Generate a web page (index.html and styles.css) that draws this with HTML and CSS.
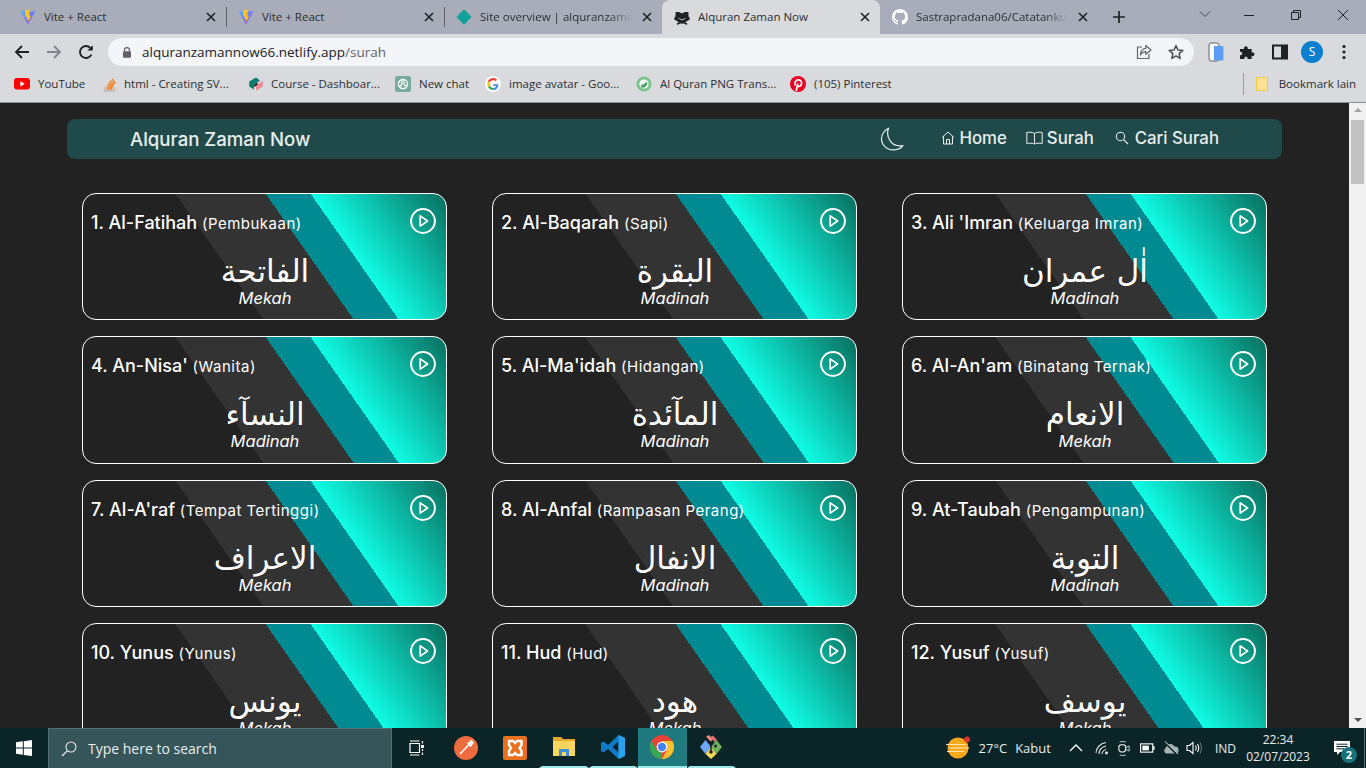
FILE: index.html
```html
<!DOCTYPE html>
<html lang="en">
<head>
  <meta charset="UTF-8">
  <title>Alquran Zaman Now</title>
  <link rel="stylesheet" href="styles.css">
</head>
<body>
  <!-- Shared icons -->
  <svg class="sprite" aria-hidden="true">
    <defs>
      <linearGradient id="vite-v" x1="0" y1="0" x2="1" y2="1">
        <stop offset="0" stop-color="#4fb6f5"/>
        <stop offset="1" stop-color="#a13cf0"/>
      </linearGradient>
    </defs>
    <symbol id="i-vite" viewBox="0 0 16 16">
      <path d="M0.5 2.2 15.5 2.2 8 15.5z" fill="url(#vite-v)"/>
      <path d="M10.6 0.4 5 1.6 5.4 8 7.2 7.6 6.6 10.6 8.2 10.2 8 13 11 7.2 9.2 7.6 10 5.2 8.6 5.4z" fill="#ffc81f"/>
    </symbol>
    <symbol id="i-close" viewBox="0 0 14 14">
      <path d="M3 3 11 11M11 3 3 11" fill="none" stroke="#202124" stroke-width="1.6"/>
    </symbol>
    <symbol id="i-play" viewBox="0 0 26 26">
      <circle cx="13" cy="13" r="11.9" fill="none" stroke="#fff" stroke-width="2"/>
      <path d="M10.2 7.9 17.6 13 10.2 18.1z" fill="none" stroke="#fff" stroke-width="1.7" stroke-linejoin="round"/>
    </symbol>
  </svg>

  <div class="tabstrip">
    <div class="tab">
      <svg class="fav" viewBox="0 0 16 16"><use href="#i-vite"/></svg>
      <span class="tab-title">Vite + React</span>
      <svg class="tab-close" viewBox="0 0 14 14"><use href="#i-close"/></svg>
    </div>
    <div class="tab tab-sep">
      <svg class="fav" viewBox="0 0 16 16"><use href="#i-vite"/></svg>
      <span class="tab-title">Vite + React</span>
      <svg class="tab-close" viewBox="0 0 14 14"><use href="#i-close"/></svg>
    </div>
    <div class="tab tab-sep">
      <svg class="fav" viewBox="0 0 16 16"><path d="M8 0.3 15.7 8 8 15.7 0.3 8z" fill="#12a19a"/></svg>
      <span class="tab-title tab-fade">Site overview | alquranzaman</span>
      <svg class="tab-close" viewBox="0 0 14 14"><use href="#i-close"/></svg>
    </div>
    <div class="tab tab-active">
      <svg class="fav" viewBox="0 0 16 16">
        <path d="M8 4.6C6.6 3 3.8 2.6 1.6 3.2L1.4 9.6C3.8 9 6.4 9.4 8 10.8 9.6 9.4 12.2 9 14.6 9.6L14.4 3.2C12.2 2.6 9.4 3 8 4.6z" fill="#202124"/>
        <path d="M0.8 7.5 0.2 10.4 8 15 15.8 10.4 15.2 7.5 8 12.4z" fill="#202124"/>
        <path d="M3 15.2 13 9.8M13 15.2 3 9.8" stroke="#202124" stroke-width="1.6"/>
      </svg>
      <span class="tab-title">Alquran Zaman Now</span>
      <svg class="tab-close" viewBox="0 0 14 14"><use href="#i-close"/></svg>
    </div>
    <div class="tab">
      <svg class="fav" viewBox="0 0 16 16"><path d="M8 0C3.58 0 0 3.58 0 8c0 3.54 2.29 6.53 5.47 7.59.4.07.55-.17.55-.38 0-.19-.01-.82-.01-1.49-2.01.37-2.53-.49-2.69-.94-.09-.23-.48-.94-.82-1.13-.28-.15-.68-.52-.01-.53.63-.01 1.08.58 1.23.82.72 1.21 1.87.87 2.33.66.07-.52.28-.87.51-1.07-1.78-.2-3.64-.89-3.64-3.95 0-.87.31-1.59.82-2.15-.08-.2-.36-1.02.08-2.12 0 0 .67-.21 2.2.82.64-.18 1.32-.27 2-.27.68 0 1.36.09 2 .27 1.53-1.04 2.2-.82 2.2-.82.44 1.1.16 1.92.08 2.12.51.56.82 1.27.82 2.15 0 3.07-1.87 3.75-3.65 3.95.29.25.54.73.54 1.48 0 1.07-.01 1.93-.01 2.2 0 .21.15.46.55.38A8.013 8.013 0 0016 8c0-4.42-3.58-8-8-8z" fill="#fff"/></svg>
      <span class="tab-title tab-fade">Sastrapradana06/Catatanku-</span>
      <svg class="tab-close" viewBox="0 0 14 14"><use href="#i-close"/></svg>
    </div>
    <div class="new-tab">
      <svg viewBox="0 0 14 14"><path d="M7 1V13M1 7H13" stroke="#202124" stroke-width="1.7"/></svg>
    </div>
    <div class="win-controls">
      <svg viewBox="0 0 12 12"><path d="M1 3.5 6 8.5 11 3.5" fill="none" stroke="#3c4043"/></svg>
      <svg viewBox="0 0 12 12"><path d="M1 6.5H11" stroke="#202124"/></svg>
      <svg viewBox="0 0 12 12"><path d="M1.5 3.5H8.5V10.5H1.5zM3.5 3.5V1.5H10.5V8.5H8.5" fill="none" stroke="#202124"/></svg>
      <svg viewBox="0 0 12 12"><path d="M1 1 11 11M11 1 1 11" stroke="#202124"/></svg>
    </div>
  </div>

  <div class="toolbar">
    <svg class="tool" viewBox="0 0 16 16"><path d="M15 8H2M8 2 2 8 8 14" fill="none" stroke="#202124" stroke-width="1.8"/></svg>
    <svg class="tool" viewBox="0 0 16 16"><path d="M1 8H14M8 2 14 8 8 14" fill="none" stroke="#80868b" stroke-width="1.8"/></svg>
    <svg class="tool" viewBox="0 0 16 16"><path d="M13.4 10.6A6 6 0 1 1 12.4 3.9" fill="none" stroke="#202124" stroke-width="1.9"/><path d="M9.4 6.6H14.8V1.2z" fill="#202124"/></svg>
    <div class="omnibox">
      <svg class="lock" viewBox="0 0 12 14"><path d="M3 6V4a3 3 0 0 1 6 0V6" fill="none" stroke="#5f6368" stroke-width="1.5"/><rect x="1.2" y="5.6" width="9.6" height="7.8" rx="1.2" fill="#5f6368"/></svg>
      <span class="url">alquranzamannow66.netlify.app<span class="url-path">/surah</span></span>
      <svg class="omni-icon share" viewBox="0 0 16 16"><path d="M6 3H1.5V14.5H13V10" fill="none" stroke="#5f6368" stroke-width="1.2"/><path d="M9.8 1.5 15 6 9.8 10.2V7.6C7.4 7.6 5.6 8.6 4.4 11 4.6 7.4 6.8 4.8 9.8 4.4z" fill="none" stroke="#5f6368" stroke-width="1.2" stroke-linejoin="round"/></svg>
      <svg class="omni-icon" viewBox="0 0 16 16"><path d="M8 1.6 9.9 6 14.8 6.4 11.1 9.6 12.2 14.4 8 11.8 3.8 14.4 4.9 9.6 1.2 6.4 6.1 6z" fill="none" stroke="#4a4d51" stroke-width="1.5" stroke-linejoin="round"/></svg>
    </div>
    <svg class="ext ext-phone" viewBox="0 0 16 20"><rect x="1" y="1" width="10" height="18" rx="2" fill="#f8f9fa" stroke="#5f6368"/><rect x="6" y="4" width="9.4" height="14.5" rx="1" fill="#5b9cf5"/></svg>
    <svg class="ext ext-puzzle" viewBox="0 0 16 16"><path d="M1 5H5C4.6 1.4 9.2 1.4 8.8 5H12.6V8.2C16.4 7.8 16.4 12.6 12.6 12.2V15H8.6C9 12 5 12 5.4 15H1V11.2C4 11.6 4 7.4 1 7.8z" fill="#202124"/></svg>
    <svg class="ext ext-panel" viewBox="0 0 16 16"><rect x="1" y="1.5" width="14" height="13" fill="none" stroke="#202124" stroke-width="2"/><rect x="9" y="1.5" width="6" height="13" fill="#202124"/></svg>
    <div class="avatar">S</div>
    <svg class="ext ext-menu" viewBox="0 0 4 16"><circle cx="2" cy="2.5" r="1.6" fill="#202124"/><circle cx="2" cy="8" r="1.6" fill="#202124"/><circle cx="2" cy="13.5" r="1.6" fill="#202124"/></svg>
  </div>

  <div class="bookmarks">
    <div class="bm bm-yt">
      <svg class="bm-icon" viewBox="0 0 16 12"><rect width="16" height="11.6" rx="3" fill="#f00"/><path d="M6.4 3.2 10.8 5.8 6.4 8.4z" fill="#fff"/></svg>
      YouTube
    </div>
    <div class="bm bm-so">
      <svg class="bm-icon" viewBox="0 0 16 16"><path d="M2.5 10.5V15H12.5V10.5" fill="none" stroke="#bcbbbb" stroke-width="1.3"/><path d="M4.5 13H10.5M4.7 11 10.6 11.6M5.3 8.8 11 10.4M6.4 6.6 11.6 9.4M8 4.6 12.4 8.2M10.2 2.8 13.2 7.4" stroke="#f48024" stroke-width="1.3"/></svg>
      html - Creating SV...
    </div>
    <div class="bm bm-course">
      <svg class="bm-icon" viewBox="0 0 16 16"><path d="M8 1.5 1.2 5.5V10.5L6 13.5V8.5L10 6 12 4.6z" fill="#0f7d6e"/><path d="M14.8 4.8V10.5L8 14.8V9.4z" fill="#ec8c96"/><path d="M6.2 8.6 9.4 6.6V9L6.2 11z" fill="#222"/></svg>
      Course - Dashboar...
    </div>
    <div class="bm bm-gpt">
      <svg class="bm-icon" viewBox="0 0 16 16"><rect width="16" height="16" rx="2.5" fill="#79ab9c"/><circle cx="8" cy="8" r="4.6" fill="none" stroke="#fff" stroke-width="1.2"/><path d="M8 3.4V8L12 10.3M8 8 4 10.3M6 4.4 10 6.7V11.6M10 4.4 6 6.7V11.6" fill="none" stroke="#fff" stroke-width=".8"/></svg>
      New chat
    </div>
    <div class="bm bm-google">
      <svg class="bm-icon" viewBox="0 0 16 16"><circle cx="8" cy="8" r="8" fill="#fff"/><path d="M13.2 8.2H8.2V9.9H11.2C10.9 11.2 9.7 11.9 8.2 11.9V14C11.4 14 13.4 11.8 13.2 8.2z" fill="#4285f4"/><path d="M8.2 11.9C6.6 11.9 5.4 11 4.9 9.6L3 11C4 12.9 5.9 14 8.2 14z" fill="#34a853"/><path d="M4.9 9.6C4.6 8.7 4.6 7.5 4.9 6.5L3 5C2.1 6.9 2.1 9.1 3 11z" fill="#fbbc05"/><path d="M4.9 6.5C5.4 5 6.7 4.2 8.2 4.2 9.2 4.2 10 4.5 10.7 5.1L12.2 3.6C11.1 2.6 9.8 2 8.2 2 5.9 2 4 3.1 3 5z" fill="#ea4335"/></svg>
      image avatar - Goo...
    </div>
    <div class="bm bm-png">
      <svg class="bm-icon" viewBox="0 0 16 16"><circle cx="8" cy="8" r="7.6" fill="#7cc68d"/><circle cx="8" cy="8" r="4.6" fill="#fff"/><path d="M5.2 8.5C7 8.8 9.2 8 10 5.5L11.5 7C11 10.5 8 12.5 5.2 11.5z" fill="#4aa564"/></svg>
      Al Quran PNG Trans...
    </div>
    <div class="bm bm-pin">
      <svg class="bm-icon" viewBox="0 0 16 16"><circle cx="8" cy="8" r="8" fill="#e60023"/><path d="M6.3 15C6.7 12.5 7.3 9.5 7.8 7.5M5.3 9.5C4 6.5 6 3.9 8.5 3.9 11 3.9 12 6 11.5 8 11 10.3 8.8 11.2 7.5 9.8" fill="none" stroke="#fff" stroke-width="1.7"/></svg>
      (105) Pinterest
    </div>
    <div class="bm-other">
      <svg class="bm-folder" viewBox="0 0 12 14"><path d="M.5 .5H11.5V13.5H.5z" fill="#fde293" stroke="#f2c94c"/></svg>
      Bookmark lain
    </div>
  </div>

  <div class="viewport">
    <div class="page">
      <nav class="nav">
        <div class="brand">Alquran Zaman Now</div>
        <svg class="moon" viewBox="0 0 24 24"><path d="M8.5 1.2C5.5 10 11 20.5 23 18.6 19.8 23 12 24.5 6.5 21 0 16.5-1 6.5 8.5 1.2z" fill="none" stroke="#e8eeee" stroke-width="1.2" stroke-linejoin="round"/></svg>
        <a class="nav-link nav-home">
          <svg viewBox="0 0 14 14"><path d="M1 6.5 7 1 13 6.5M2.5 5.5V13H11.5V5.5M5.5 13V8.5H8.5V13" fill="none" stroke="#e8eeee" stroke-width="1"/></svg>
          Home
        </a>
        <a class="nav-link nav-surah">
          <svg class="icon-book" viewBox="0 0 17 14"><path d="M8.5 2.5C6.5 1 3.5 1 .8 1.5V12.5C3.5 12 6.5 12 8.5 13 10.5 12 13.5 12 16.2 12.5V1.5C13.5 1 10.5 1 8.5 2.5zM8.5 2.5V13" fill="none" stroke="#e8eeee" stroke-width="1"/></svg>
          Surah
        </a>
        <a class="nav-link nav-search">
          <svg viewBox="0 0 14 14"><circle cx="5.5" cy="5.5" r="4.2" fill="none" stroke="#e8eeee" stroke-width="1.1"/><path d="M8.8 8.8 13 13" stroke="#e8eeee" stroke-width="1.2"/></svg>
          Cari Surah
        </a>
      </nav>

      <main class="surah-grid">
        <div class="card">
          <div class="card-head"><span class="card-title">1. Al-Fatihah <small>(Pembukaan)</small></span><svg class="play" viewBox="0 0 26 26"><use href="#i-play"/></svg></div>
          <div class="arabic" lang="ar" dir="rtl">الفاتحة</div>
          <div class="place">Mekah</div>
        </div>
        <div class="card">
          <div class="card-head"><span class="card-title">2. Al-Baqarah <small>(Sapi)</small></span><svg class="play" viewBox="0 0 26 26"><use href="#i-play"/></svg></div>
          <div class="arabic" lang="ar" dir="rtl">البقرة</div>
          <div class="place">Madinah</div>
        </div>
        <div class="card">
          <div class="card-head"><span class="card-title">3. Ali 'Imran <small>(Keluarga Imran)</small></span><svg class="play" viewBox="0 0 26 26"><use href="#i-play"/></svg></div>
          <div class="arabic" lang="ar" dir="rtl">اٰل عمران</div>
          <div class="place">Madinah</div>
        </div>
        <div class="card">
          <div class="card-head"><span class="card-title">4. An-Nisa' <small>(Wanita)</small></span><svg class="play" viewBox="0 0 26 26"><use href="#i-play"/></svg></div>
          <div class="arabic" lang="ar" dir="rtl">النسآء</div>
          <div class="place">Madinah</div>
        </div>
        <div class="card">
          <div class="card-head"><span class="card-title">5. Al-Ma'idah <small>(Hidangan)</small></span><svg class="play" viewBox="0 0 26 26"><use href="#i-play"/></svg></div>
          <div class="arabic" lang="ar" dir="rtl">المآئدة</div>
          <div class="place">Madinah</div>
        </div>
        <div class="card">
          <div class="card-head"><span class="card-title">6. Al-An'am <small>(Binatang Ternak)</small></span><svg class="play" viewBox="0 0 26 26"><use href="#i-play"/></svg></div>
          <div class="arabic" lang="ar" dir="rtl">الانعام</div>
          <div class="place">Mekah</div>
        </div>
        <div class="card">
          <div class="card-head"><span class="card-title">7. Al-A'raf <small>(Tempat Tertinggi)</small></span><svg class="play" viewBox="0 0 26 26"><use href="#i-play"/></svg></div>
          <div class="arabic" lang="ar" dir="rtl">الاعراف</div>
          <div class="place">Mekah</div>
        </div>
        <div class="card">
          <div class="card-head"><span class="card-title">8. Al-Anfal <small>(Rampasan Perang)</small></span><svg class="play" viewBox="0 0 26 26"><use href="#i-play"/></svg></div>
          <div class="arabic" lang="ar" dir="rtl">الانفال</div>
          <div class="place">Madinah</div>
        </div>
        <div class="card">
          <div class="card-head"><span class="card-title">9. At-Taubah <small>(Pengampunan)</small></span><svg class="play" viewBox="0 0 26 26"><use href="#i-play"/></svg></div>
          <div class="arabic" lang="ar" dir="rtl">التوبة</div>
          <div class="place">Madinah</div>
        </div>
        <div class="card">
          <div class="card-head"><span class="card-title">10. Yunus <small>(Yunus)</small></span><svg class="play" viewBox="0 0 26 26"><use href="#i-play"/></svg></div>
          <div class="arabic" lang="ar" dir="rtl">يونس</div>
          <div class="place">Mekah</div>
        </div>
        <div class="card">
          <div class="card-head"><span class="card-title">11. Hud <small>(Hud)</small></span><svg class="play" viewBox="0 0 26 26"><use href="#i-play"/></svg></div>
          <div class="arabic" lang="ar" dir="rtl">هود</div>
          <div class="place">Mekah</div>
        </div>
        <div class="card">
          <div class="card-head"><span class="card-title">12. Yusuf <small>(Yusuf)</small></span><svg class="play" viewBox="0 0 26 26"><use href="#i-play"/></svg></div>
          <div class="arabic" lang="ar" dir="rtl">يوسف</div>
          <div class="place">Mekah</div>
        </div>
      </main>
    </div>

    <div class="scrollbar">
      <div class="arrow-up"></div>
      <div class="thumb"></div>
      <div class="arrow-down"></div>
    </div>
  </div>

  <div class="taskbar">
    <div class="start">
      <svg viewBox="0 0 16 16"><path d="M0 2.3 6.8 1.3V7.6H0zM7.8 1.2 16 0V7.6H7.8zM0 8.5H6.8V14.8L0 13.8zM7.8 8.5H16V16L7.8 14.9z" fill="#fff"/></svg>
    </div>
    <div class="search">
      <svg viewBox="0 0 16 16"><circle cx="10" cy="6" r="5" fill="none" stroke="#e8eeee" stroke-width="1.1"/><path d="M6.4 9.6 1 15" stroke="#e8eeee" stroke-width="1.2"/></svg>
      Type here to search
    </div>
    <div class="task">
      <svg class="icon-16" viewBox="0 0 16 16"><path d="M1 3.5H10.5V12.5H1zM1 1H10.5M1 15H10.5" fill="none" stroke="#fff" stroke-width="1.2"/><path d="M13.5 1V3.5M13.5 12.5V15" stroke="#fff" stroke-width="1.2"/><rect x="12" y="5" width="3" height="3" fill="#fff"/><path d="M13.5 9V11" stroke="#fff" stroke-width="1.2"/></svg>
    </div>
    <div class="task">
      <svg class="icon-24" viewBox="0 0 24 24"><circle cx="12" cy="12" r="12" fill="#ef6c3e"/><path d="M6 18 15 8.5M14 7.5 17.5 4.8 19 6.5 16.5 10z" stroke="#fff" stroke-width="1.5" fill="#fff"/></svg>
    </div>
    <div class="task">
      <svg class="icon-24" viewBox="0 0 24 24"><rect width="24" height="24" rx="2" fill="#e9701f"/><path d="M6 5H10L12 7 14 5H18.5V9L16.5 12 18.5 15V19H14L12 17 10 19H6V15L8 12 6 9z" fill="none" stroke="#fff" stroke-width="2.4"/></svg>
    </div>
    <div class="task task-open">
      <svg class="icon-24" viewBox="0 0 24 24"><path d="M1 2H9L11 4H23V21H1z" fill="#e6a92e"/><path d="M1 6H23V21H1z" fill="#fbd65f"/><path d="M7 14H17V21H14V17H10V21H7z" fill="#3d8fd8"/></svg>
    </div>
    <div class="task task-open">
      <svg class="icon-24" viewBox="0 0 24 24"><path d="M17.5 0 24 3V21L17.5 24 7 14 2.5 17.5 0 16V8L2.5 6.5 7 10zM17.5 6.5 11.5 12 17.5 17.5z" fill="#0f7ac6"/><path d="M17.5 0 24 3V21L17.5 24z" fill="#2aa1ec"/></svg>
    </div>
    <div class="task task-open task-active">
      <svg class="icon-24" viewBox="0 0 24 24"><circle cx="12" cy="12" r="12" fill="#ea4335"/><path d="M12 24A12 12 0 0 1 1.6 6L7 15.5 12 18z" fill="#34a853"/><path d="M12 24A12 12 0 0 0 22.4 6H12L17 15z" fill="#fbc02d"/><circle cx="12" cy="12" r="5.4" fill="#fff"/><circle cx="12" cy="12" r="4.2" fill="#4285f4"/></svg>
    </div>
    <div class="task task-open">
      <svg class="icon-24" viewBox="0 0 24 24"><path d="M1 12 6.5 5 12 12 6.5 19z" fill="#6ea8fe"/><path d="M12 12 17.5 5 23 12 17.5 19z" fill="#6fb35a"/><path d="M6.5 19 12 12 17.5 19 12 24z" fill="#f6d860"/><path d="M7 1.5 10 0 13.5 4.5 12 7z" fill="#f08a8a"/><path d="M11 2 14 .5 18 5 15.5 7z" fill="#e46f6f"/><path d="M12 6V18" stroke="#222" stroke-width="1.5"/><circle cx="12" cy="17" r="1.8" fill="#222"/><circle cx="16.5" cy="11" r="1.5" fill="#222"/></svg>
    </div>

    <div class="tray">
      <div class="weather">
        <svg viewBox="0 0 24 24"><circle cx="12" cy="12" r="10.5" fill="#f6a81c"/><path d="M0 8.5H20M4 12H23M1 15.5H18" stroke="#fde9b8" stroke-width="1.2"/><circle cx="21" cy="3.5" r="3" fill="#d9352b"/></svg>
        <span class="temp">27°C</span>
        <span>Kabut</span>
      </div>
      <svg class="tray-icon chev" viewBox="0 0 14 14"><path d="M1 10 7 4 13 10" fill="none" stroke="#fff" stroke-width="1.3"/></svg>
      <svg class="tray-icon wifi" viewBox="0 0 14 14"><path d="M1 12C1 7 5 2.5 11 1.5M4 13C4 9 7 6 11 5M7 13C7 11 9 9 11 8.5" fill="none" stroke="#dfe6e6" stroke-width="1.1"/><circle cx="11.5" cy="12" r="1.4" fill="#fff"/></svg>
      <svg class="tray-icon cam" viewBox="0 0 14 18"><rect x="1" y="4.5" width="8" height="8.5" rx="3" fill="none" stroke="#fff" stroke-width="1.2"/><path d="M9 8 13 6V12L9 10M2 1.5C4 .5 7 .5 9 1.5M2 16.5C4 17.5 7 17.5 9 16.5" fill="none" stroke="#dfe6e6" stroke-width="1"/></svg>
      <svg class="tray-icon batt" viewBox="0 0 16 10"><rect x=".6" y=".6" width="13" height="8.8" fill="none" stroke="#fff" stroke-width="1.2"/><rect x="2.5" y="2.5" width="7" height="5" fill="#fff"/><rect x="14" y="3" width="1.5" height="4" fill="#fff"/></svg>
      <svg class="tray-icon cloud" viewBox="0 0 16 14"><path d="M3.5 12.5A3 3 0 0 1 3 6.8 4.5 4.5 0 0 1 11.5 5.5 3.5 3.5 0 0 1 12.5 12.5z" fill="#a9b4b5"/><path d="M1.5 1 14.5 13.5" stroke="#0a2427" stroke-width="2.4"/><path d="M2 .5 15 13" stroke="#dfe6e6" stroke-width="1"/></svg>
      <svg class="tray-icon speaker" viewBox="0 0 16 14"><path d="M1 4.5H3.5L7 1.5V12.5L3.5 9.5H1z" fill="none" stroke="#fff" stroke-width="1.1"/><path d="M9.5 4.5C10.5 6 10.5 8 9.5 9.5M11.5 3C13 5.5 13 8.5 11.5 11" fill="none" stroke="#fff" stroke-width="1.1"/><path d="M14 1.5C15.8 5 15.8 9 14 12.5" fill="none" stroke="#6b7b7d" stroke-width="1"/></svg>
      <span class="lang">IND</span>
      <div class="clock"><span>22:34</span><span>02/07/2023</span></div>
      <div class="notif">
        <svg viewBox="0 0 16 14"><path d="M0 0H16V11H6L3 14V11H0z" fill="#fff"/><path d="M2.5 3.2H13.5M2.5 5.5H13.5M2.5 7.8H10" stroke="#0a2427"/></svg>
        <span class="notif-badge">2</span>
      </div>
      <div class="show-desktop"></div>
    </div>
  </div>
</body>
</html>
```

FILE: styles.css
```css
/* Basic reset */
* {
  box-sizing: border-box;
  margin: 0;
  padding: 0;
}

body {
  width: 100vw;
  height: 100vh;
  overflow: hidden;
  display: flex;
  flex-direction: column;
  background-color: #222;
  font-family: "Open Sans", sans-serif;
}

.sprite {
  position: absolute;
  width: 0;
  height: 0;
}

/* Browser tabs */
.tabstrip {
  height: 34px;
  flex: none;
  display: flex;
  align-items: flex-end;
  padding-left: 8px;
  background-color: #a9adb9;
}

.tab {
  width: 218px;
  height: 34px;
  flex: none;
  display: flex;
  align-items: center;
  padding: 0 8px 1px 12px;
  gap: 8px;
  color: #2b2e33;
  font-size: 11.5px;
}

.tab-sep {
  position: relative;
}

.tab-sep::before {
  content: "";
  position: absolute;
  left: 0;
  top: 7px;
  width: 1px;
  height: 20px;
  background-color: #5f6368;
}

.tab-active {
  background-color: #d8dade;
  border-radius: 8px 8px 0 0;
}

.fav {
  width: 16px;
  height: 16px;
  flex: none;
}

.tab-title {
  flex: 1;
  min-width: 0;
  white-space: nowrap;
}

.tab-fade {
  -webkit-mask-image: linear-gradient(to right, #000 85%, transparent);
  mask-image: linear-gradient(to right, #000 85%, transparent);
}

.tab-close {
  width: 14px;
  height: 14px;
  flex: none;
}

.new-tab {
  width: 42px;
  height: 34px;
  flex: none;
  display: flex;
  align-items: center;
  justify-content: center;
}

.new-tab svg {
  width: 14px;
  height: 14px;
}

.win-controls {
  margin-left: auto;
  height: 34px;
  display: flex;
  align-items: flex-start;
  gap: 35px;
  padding: 9px 17px 0 0;
}

.win-controls svg {
  width: 12px;
  height: 12px;
}

.win-controls svg:first-child {
  margin-top: -1px;
  margin-right: -3px;
}

/* Address bar */
.toolbar {
  height: 34px;
  flex: none;
  display: flex;
  align-items: center;
  padding: 2px 19px 0 14px;
  background-color: #d8dade;
}

.tool {
  width: 16px;
  height: 16px;
  flex: none;
  margin-right: 16px;
}

.omnibox {
  width: 1086px;
  height: 28px;
  flex: none;
  margin-left: -2px;
  display: flex;
  align-items: center;
  padding: 0 10px 0 14px;
  border-radius: 14px;
  background-color: #f3f5f8;
}

.lock {
  width: 10px;
  height: 13px;
  margin-right: 10px;
}

.url {
  flex: 1;
  font-size: 13.5px;
  color: #202124;
}

.url-path {
  color: #5f6368;
}

.omni-icon {
  width: 16px;
  height: 16px;
}

.share {
  margin-right: 16px;
}

.ext {
  flex: none;
}

.ext-phone {
  width: 16px;
  height: 20px;
  margin-left: 14px;
}

.ext-puzzle {
  width: 16px;
  height: 16px;
  margin-left: 15px;
}

.ext-panel {
  width: 16px;
  height: 16px;
  margin-left: 17px;
}

.avatar {
  width: 22px;
  height: 22px;
  flex: none;
  margin-left: 13px;
  border-radius: 50%;
  background-color: #0a7fd0;
  color: #fff;
  font-size: 12px;
  line-height: 22px;
  text-align: center;
}

.ext-menu {
  width: 4px;
  height: 16px;
  margin-left: 19px;
}

/* Bookmarks */
.bookmarks {
  height: 35px;
  flex: none;
  display: flex;
  align-items: center;
  padding: 0 10px 3px 14px;
  background-color: #d8dade;
  border-bottom: 1px solid #8c8e92;
  color: #2b2e33;
  font-size: 11.5px;
}

.bm {
  display: flex;
  align-items: center;
  gap: 8px;
  white-space: nowrap;
  flex: none;
}

.bm-icon {
  width: 16px;
  height: 16px;
  flex: none;
}

.bm-yt { width: 88px; }
.bm-so { width: 146px; gap: 6px; }
.bm-course { width: 147px; gap: 7px; }
.bm-gpt { width: 90px; }
.bm-google { width: 151px; }
.bm-png { width: 154px; }

.bm-other {
  margin-left: auto;
  height: 22px;
  display: flex;
  align-items: center;
  padding-left: 12px;
  gap: 11px;
  border-left: 1px solid #9a9ca0;
}

.bm-folder {
  width: 12px;
  height: 14px;
}

/* Page */
.viewport {
  flex: 1;
  min-height: 0;
  display: flex;
}

.page {
  flex: 1;
  min-width: 0;
  overflow: hidden;
  padding: 16px 67px 0;
  background-color: #222;
  font-family: Inter, sans-serif;
  color: #fff;
}

.nav {
  height: 40px;
  display: flex;
  align-items: center;
  padding: 0 63px;
  border-radius: 8px;
  background-color: #204a4a;
  color: #e8eeee;
}

.brand {
  font-size: 18.6px;
  font-weight: 500;
}

.moon {
  width: 24px;
  height: 24px;
  margin-left: auto;
}

.nav-link {
  display: flex;
  align-items: center;
  gap: 4px;
  margin-bottom: 2px;
  font-size: 16.8px;
  font-weight: 500;
}

.nav-link svg {
  width: 14px;
  height: 14px;
}

.nav-link .icon-book {
  width: 17px;
}

.nav-home {
  margin-left: 37px;
}

.nav-surah {
  margin-left: 19px;
}

.nav-search {
  margin-left: 21px;
  gap: 6px;
}

.surah-grid {
  margin-top: 34px;
  padding: 0 15px;
  display: grid;
  grid-template-columns: repeat(3, 365px);
  grid-auto-rows: 127.4px;
  column-gap: 45px;
  row-gap: 16px;
}

.card {
  padding: 14px 9px 0 10px;
  border: 1px solid #fff;
  border-radius: 14px;
  text-align: center;
  background: linear-gradient(55deg, #222 40%, #333 40%, #333 60%, #008b93 60%, #008b93 70%, #10fde5 70%, #086e5e 100%);
}

.card-head {
  height: 26px;
  margin: 0 1px 0 -2px;
  display: flex;
  justify-content: space-between;
  align-items: center;
}

.card-title {
  padding-top: 3px;
  font-size: 18px;
  font-weight: 500;
  white-space: nowrap;
}

.card-title small {
  font-size: 15px;
  font-weight: 400;
  letter-spacing: .5px;
}

.play {
  width: 26px;
  height: 26px;
  flex: none;
}

.arabic {
  margin-top: 17px;
  font-family: "DejaVu Sans", sans-serif;
  font-size: 31px;
  line-height: 40px;
}

.place {
  margin-top: -3px;
  font-size: 16.5px;
  font-style: italic;
  line-height: 20px;
}

/* Scrollbar */
.scrollbar {
  width: 17px;
  flex: none;
  display: flex;
  flex-direction: column;
  align-items: center;
  background-color: #f1f1f1;
}

.arrow-up,
.arrow-down {
  width: 0;
  height: 0;
  margin-top: 5px;
  border-left: 4px solid transparent;
  border-right: 4px solid transparent;
}

.arrow-up {
  border-bottom: 4px solid #a3a3a3;
}

.arrow-down {
  margin-top: auto;
  margin-bottom: 6px;
  border-top: 4px solid #505050;
}

.thumb {
  width: 13px;
  height: 64px;
  margin-top: 8px;
  background-color: #c1c1c1;
}

/* Windows taskbar */
.taskbar {
  height: 40px;
  flex: none;
  display: flex;
  align-items: stretch;
  background-color: #0b2427;
  color: #e8eeee;
}

.start {
  width: 48px;
  display: flex;
  align-items: center;
  justify-content: center;
}

.start svg {
  width: 16px;
  height: 16px;
}

.search {
  width: 344px;
  display: flex;
  align-items: center;
  gap: 11px;
  padding-left: 12px;
  border: 1px solid #557073;
  border-bottom: none;
  background-color: #355558;
  font-size: 14px;
}

.search svg {
  width: 16px;
  height: 16px;
}

.task {
  width: 49.15px;
  flex: none;
  display: flex;
  align-items: center;
  justify-content: center;
}

.task-open {
  border-bottom: 2px solid #9fe8ea;
  border-left: 3px solid #0b2427;
  border-right: 3px solid #0b2427;
}

.task-active {
  border-left: none;
  border-right: none;
  background-color: #1f7a80;
}

.icon-16 {
  width: 16px;
  height: 16px;
}

.icon-24 {
  width: 24px;
  height: 24px;
}

.tray {
  margin-left: auto;
  display: flex;
  align-items: center;
  font-size: 13px;
}

.weather {
  display: flex;
  align-items: center;
  gap: 8px;
  font-size: 13px;
}

.weather svg {
  width: 24px;
  height: 24px;
}

.temp {
  margin-left: 1px;
}

.tray-icon {
  flex: none;
}

.chev {
  width: 14px;
  height: 14px;
  margin-left: 18px;
}

.wifi {
  width: 14px;
  height: 14px;
  margin-left: 12px;
}

.cam {
  width: 12px;
  height: 17px;
  margin-left: 9px;
}

.batt {
  width: 15px;
  height: 10px;
  margin-left: 10px;
}

.cloud {
  width: 16px;
  height: 14px;
  margin-left: 8px;
}

.speaker {
  width: 16px;
  height: 14px;
  margin-left: 7px;
}

.lang {
  margin-left: 13px;
  font-size: 12px;
}

.clock {
  width: 72px;
  margin-left: 6px;
  display: flex;
  flex-direction: column;
  align-items: center;
  font-size: 12px;
  line-height: 17px;
}

.notif {
  position: relative;
  width: 16px;
  height: 14px;
  margin-left: 20px;
  margin-right: 6px;
}

.notif svg {
  display: block;
  width: 16px;
  height: 14px;
}

.notif-badge {
  position: absolute;
  left: 7px;
  top: 6px;
  width: 16px;
  height: 16px;
  border-radius: 50%;
  background-color: #17727a;
  color: #fff;
  font-size: 11px;
  font-weight: 700;
  line-height: 16px;
  text-align: center;
}

.show-desktop {
  width: 1px;
  height: 40px;
  margin-left: 8px;
  margin-right: 1px;
  background-color: #5c7073;
}
```
